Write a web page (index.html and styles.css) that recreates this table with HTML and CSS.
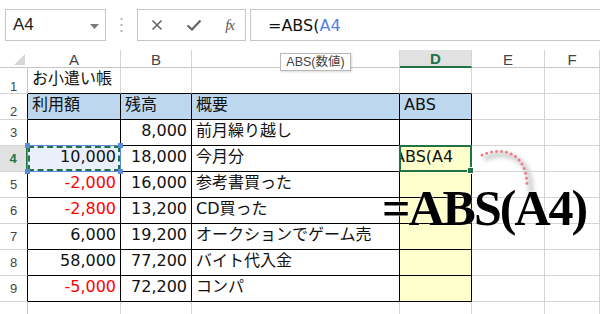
FILE: index.html
```html
<!DOCTYPE html>
<html lang="ja">
<head>
<meta charset="utf-8">
<link rel="stylesheet" href="styles.css">
</head>
<body>
<div class="fbar">
  <div class="namebox"><span>A4</span><svg class="caret" width="9" height="5" viewBox="0 0 9 5"><path d="M0 0h9L4.5 5z" fill="#7a7a7a"/></svg></div>
  <div class="grip"><svg width="3" height="14" viewBox="0 0 3 14"><rect x="0.5" y="0" width="2" height="2" fill="#b5b5b5"/><rect x="0.5" y="6" width="2" height="2" fill="#b5b5b5"/><rect x="0.5" y="12" width="2" height="2" fill="#b5b5b5"/></svg></div>
  <div class="btns">
    <svg width="12" height="12" viewBox="0 0 12 12"><path d="M1.5 1.5l9 9M10.5 1.5l-9 9" stroke="#666" stroke-width="1.6"/></svg>
    <svg width="16" height="12" viewBox="0 0 16 12"><path d="M1.5 6.5l4.5 4L14.5 1.5" stroke="#666" stroke-width="2.2" fill="none"/></svg>
    <span class="fx">fx</span>
  </div>
  <div class="formula">=ABS(<span class="ref">A4</span></div>
</div>

<div class="sheet">
  <div class="c ch corner"><svg width="11" height="11" viewBox="0 0 11 11"><path d="M0 11L11 0v11z" fill="#d6d6d6"/></svg></div>
  <div class="c ch">A</div>
  <div class="c ch">B</div>
  <div class="c ch"></div>
  <div class="c ch chsel">D</div>
  <div class="c ch">E</div>
  <div class="c ch">F</div>

  <div class="c rh r1">1</div>
  <div class="c bb">お小遣い帳</div>
  <div class="c bb"></div>
  <div class="c bb"></div>
  <div class="c bb"></div>
  <div class="c"></div>
  <div class="c"></div>

  <div class="c rh r2 br">2</div>
  <div class="c t hd">利用額</div>
  <div class="c t hd">残高</div>
  <div class="c t hd">概要</div>
  <div class="c t hd">ABS</div>
  <div class="c"></div>
  <div class="c"></div>

  <div class="c rh br">3</div>
  <div class="c t n"></div>
  <div class="c t n">8,000</div>
  <div class="c t">前月繰り越し</div>
  <div class="c t"></div>
  <div class="c"></div>
  <div class="c"></div>

  <div class="c rh br rhsel">4</div>
  <div class="c t n refcell">10,000<i class="ants"></i><b class="hd1"></b><b class="hd2"></b><b class="hd3"></b><b class="hd4"></b></div>
  <div class="c t n">18,000</div>
  <div class="c t">今月分</div>
  <div class="c t y edit"><span class="clip">ABS(A4</span><i class="selbox"></i><b class="fill"></b></div>
  <div class="c"></div>
  <div class="c"></div>

  <div class="c rh br">5</div>
  <div class="c t n neg">-2,000</div>
  <div class="c t n">16,000</div>
  <div class="c t">参考書買った</div>
  <div class="c t y"></div>
  <div class="c"></div>
  <div class="c"></div>

  <div class="c rh br">6</div>
  <div class="c t n neg">-2,800</div>
  <div class="c t n">13,200</div>
  <div class="c t">CD買った</div>
  <div class="c t y"></div>
  <div class="c"></div>
  <div class="c"></div>

  <div class="c rh br">7</div>
  <div class="c t n">6,000</div>
  <div class="c t n">19,200</div>
  <div class="c t">オークションでゲーム売</div>
  <div class="c t y"></div>
  <div class="c"></div>
  <div class="c"></div>

  <div class="c rh br">8</div>
  <div class="c t n">58,000</div>
  <div class="c t n">77,200</div>
  <div class="c t">バイト代入金</div>
  <div class="c t y"></div>
  <div class="c"></div>
  <div class="c"></div>

  <div class="c rh br">9</div>
  <div class="c t n neg">-5,000</div>
  <div class="c t n">72,200</div>
  <div class="c t">コンパ</div>
  <div class="c t y"></div>
  <div class="c"></div>
  <div class="c"></div>

  <div class="c rh"></div>
  <div class="c"></div>
  <div class="c"></div>
  <div class="c"></div>
  <div class="c"></div>
  <div class="c"></div>
  <div class="c"></div>

  <div class="tip">ABS(数値)</div>
  <svg class="arc" width="90" height="70" viewBox="0 0 90 70">
    <defs><filter id="bl" x="-30%" y="-30%" width="160%" height="160%"><feGaussianBlur stdDeviation="2"/></filter></defs>
    <path d="M14 19 C34 10 62 14 61 54" stroke="#cfcfcf" stroke-width="5" fill="none" filter="url(#bl)"/>
    <path d="M12 15 C30 7 58 10 57 48" stroke="#ee7d88" stroke-width="3" stroke-linecap="round" stroke-dasharray="0 5" fill="none"/>
  </svg>
  <div class="big">=ABS(A4)</div>
</div>
</body>
</html>
```

FILE: styles.css
```css
* { box-sizing: border-box; }

body {
  margin: 0;
  width: 600px;
  height: 314px;
  overflow: hidden;
  background: #fff;
  font-family: "DejaVu Sans", "Noto Sans CJK JP", sans-serif;
  color: #111;
}

/* formula bar */
.fbar {
  height: 50px;
  display: flex;
  align-items: flex-start;
  padding-top: 9px;
}
.namebox {
  margin-left: 5px;
  width: 101px;
  height: 32px;
  border: 1px solid #c6c6c6;
  display: flex;
  align-items: center;
  justify-content: space-between;
  padding: 0 6px 0 7px;
  font-family: "Liberation Sans", sans-serif;
  font-size: 17px;
  color: #222;
}
.caret { margin-top: 2px; }
.grip {
  width: 31px;
  height: 32px;
  display: flex;
  align-items: center;
  justify-content: center;
}
.btns {
  width: 109px;
  height: 32px;
  border: 1px solid #c6c6c6;
  display: flex;
  align-items: center;
  justify-content: space-between;
  padding: 0 11px 0 13px;
}
.fx {
  font-family: "Liberation Serif", serif;
  font-style: italic;
  font-size: 15px;
  color: #555;
  letter-spacing: -1px;
}
.formula {
  margin-left: 4px;
  flex: 1;
  height: 32px;
  border: 1px solid #c6c6c6;
  border-right: none;
  padding-left: 17px;
  display: flex;
  align-items: center;
  font-size: 16px;
  color: #111;
}
.ref { color: #4f81e0; }

/* sheet */
.sheet {
  position: relative;
  display: grid;
  grid-template-columns: 28px 93px 71px 208px 72px 73px 55px;
  grid-template-rows: 18px repeat(10, 26px);
}
.c {
  border-right: 1px solid #d4d4d4;
  border-bottom: 1px solid #d4d4d4;
  display: flex;
  align-items: center;
  padding: 0 4px 3px;
  font-size: 16px;
  line-height: 18px;
  white-space: nowrap;
}
.ch {
  justify-content: center;
  padding: 2px 0 0;
  font-family: "Liberation Sans", sans-serif;
  font-size: 15px;
  color: #444;
  border-bottom-color: #c6c6c6;
}
.corner {
  justify-content: flex-end;
  align-items: flex-end;
  padding: 0 2px 2px 0;
  border-right-color: #fff;
}
.chsel {
  background: #e1e1e1;
  color: #217346;
  font-weight: bold;
  border-bottom: 2px solid #217346;
}
.rh {
  justify-content: center;
  padding: 0;
  font-family: "Liberation Sans", sans-serif;
  font-size: 13px;
  color: #444;
  border-right-color: #c6c6c6;
}
.r1 { padding-top: 12px; }
.r2 { padding-top: 10px; }
.rhsel {
  background: #e1e1e1;
  color: #217346;
  font-weight: bold;
}
.br { border-right-color: #000; }
.rhsel.br { border-right: 2px solid #217346; }
.bb { border-bottom-color: #000; }
.t { border-right-color: #000; border-bottom-color: #000; }
.hd { background: #bdd7ee; }
.y { background: #ffffcc; }
.n { justify-content: flex-end; }
.neg { color: #ff0000; }

/* referenced range A4 */
.refcell {
  position: relative;
  background: #eaf0fb;
}
.ants {
  position: absolute;
  left: -1px; top: -1px; right: -1px; bottom: -1px;
  border: 1px solid #5b8bd8;
}
.ants::after {
  content: "";
  position: absolute;
  inset: 0;
  border: 2px dashed #217346;
}
.refcell b {
  position: absolute;
  width: 5px;
  height: 5px;
  background: #5b8bd8;
}
.hd1 { left: -3px; top: -3px; }
.hd2 { right: -3px; top: -3px; }
.hd3 { left: -3px; bottom: -3px; }
.hd4 { right: -3px; bottom: -3px; }

/* editing cell D4 */
.edit {
  position: relative;
  overflow: visible;
  padding-left: 0;
}
.clip {
  display: block;
  overflow: hidden;
  width: 66px;
  padding-left: 0;
  text-indent: -7px;
  margin-left: 1px;
}
.selbox {
  position: absolute;
  left: -1px; top: -1px; right: -1px; bottom: -1px;
  border: 2px solid #217346;
}
.fill {
  position: absolute;
  right: -3px;
  bottom: -3px;
  width: 5px;
  height: 5px;
  background: #217346;
  border: 1px solid #fff;
  box-sizing: content-box;
}

/* overlays */
.tip {
  position: absolute;
  left: 280px;
  top: 3px;
  width: 71px;
  height: 18px;
  background: #fff;
  border: 1px solid #b8b8b8;
  box-shadow: 1px 1px 2px rgba(0,0,0,.15);
  font-family: "Liberation Sans", "Noto Sans CJK JP", sans-serif;
  font-size: 12.5px;
  line-height: 16px;
  color: #444;
  text-align: center;
}
.arc {
  position: absolute;
  left: 470px;
  top: 90px;
}
.big {
  position: absolute;
  left: 382px;
  top: 133px;
  font-family: "Liberation Serif", serif;
  font-weight: bold;
  font-size: 50px;
  line-height: 50px;
  letter-spacing: -2px;
  color: #000;
  white-space: nowrap;
  text-shadow: 0 0 2px #fff;
}
```
